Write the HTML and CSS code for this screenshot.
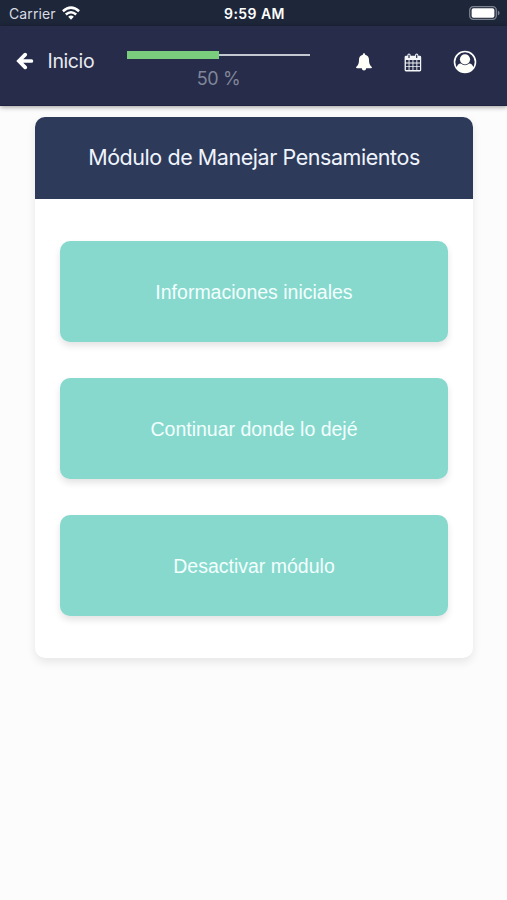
FILE: index.html
```html
<!DOCTYPE html>
<html lang="es">
<head>
<meta charset="utf-8">
<title>Módulo de Manejar Pensamientos</title>
<link rel="stylesheet" href="styles.css">
</head>
<body>
<div class="status">
  <div class="status-left">
    <span class="carrier">Carrier</span>
    <svg class="wifi" viewBox="0 0 18 14" width="18" height="14"><g fill="none" stroke="#fff" stroke-width="2.5"><path d="M.9 5.2Q9-2 17.1 5.2"/><path d="M3.8 8.5Q9 4 14.2 8.5"/></g><path d="M6.2 10.7Q9 8.4 11.8 10.7L9 13.7Z" fill="#fff"/></svg>
  </div>
  <span class="time">9:59 AM</span>
  <div class="status-right">
    <svg viewBox="0 0 31 14" width="31" height="14"><rect x=".7" y=".7" width="26.6" height="12.6" rx="3.6" fill="none" stroke="#7b8290" stroke-width="1.3"/><rect x="2.6" y="2.3" width="22.8" height="9.4" rx="1.8" fill="#fff"/><path d="M28.8 4.6Q30.6 5.4 30.6 7T28.8 9.4Z" fill="#7b8290"/></svg>
  </div>
</div>
<header class="nav">
  <a class="back">
    <svg viewBox="0 0 18 18" width="18" height="18"><path d="M9.2 2.6L2.9 9l6.3 6.4M3.4 9H15.4" fill="none" stroke="#fff" stroke-width="3.7" stroke-linecap="round"/></svg>
    <span class="back-label">Inicio</span>
  </a>
  <div class="progress">
    <div class="track"><div class="fill"></div></div>
    <span class="percent">50 %</span>
  </div>
  <div class="actions">
    <svg viewBox="0 0 16 18" width="16" height="18"><path d="M8 .3C8.8.3 9.2.9 9.1 1.7C11.8 2.2 13 4.3 13 6.6C13 11 14.1 12.6 16 14.2Q15.9 15.3 14.8 15.3H1.2Q.1 15.3 0 14.2C1.9 12.6 3 11 3 6.6C3 4.3 4.2 2.2 6.9 1.7C6.8.9 7.2.3 8 .3ZM5.8 15.2H10.2Q10 17.6 8 17.6T5.8 15.2Z" fill="#fffffa"/></svg>
    <svg class="calendar" viewBox="0 0 18 19" width="18" height="19"><path fill-rule="evenodd" fill="#f4f5f7" d="M2 2.8H3.4V2Q3.4.5 5 .5T6.6 2V2.8H11.1V2Q11.1.5 12.7.5T14.3 2V2.8H15.8Q17.2 2.8 17.2 4.2V17Q17.2 18.4 15.8 18.4H2Q.6 18.4.6 17V4.2Q.6 2.8 2 2.8ZM4.4 1.8V5H5.6V1.8ZM12.1 1.8V5H13.3V1.8ZM1.9 7V9.5H4.6V7ZM5.5 7V9.5H8.5V7ZM9.4 7V9.5H12.4V7ZM13.3 7V9.5H16V7ZM1.9 10.4V13.2H4.6V10.4ZM5.5 10.4V13.2H8.5V10.4ZM9.4 10.4V13.2H12.4V10.4ZM13.3 10.4V13.2H16V10.4ZM1.9 14.1V17H4.6V14.1ZM5.5 14.1V17H8.5V14.1ZM9.4 14.1V17H12.4V14.1ZM13.3 14.1V17H16V14.1Z"/></svg>
    <svg class="user" viewBox="0 0 24 24" width="24" height="24"><circle cx="12" cy="12" r="10.5" fill="none" stroke="#fff" stroke-width="1.6"/><circle cx="12" cy="9.3" r="5.1" fill="#fffffa"/><path d="M3.5 18Q4.2 13.5 7.8 13.4Q12 17 16.2 13.4Q19.8 13.5 20.5 18Q17 22.5 12 22.5T3.5 18Z" fill="#fffffa"/></svg>
  </div>
</header>
<main class="card">
  <h1 class="card-title"><span>Módulo de Manejar Pensamientos</span></h1>
  <div class="options">
    <button class="option">Informaciones iniciales</button>
    <button class="option">Continuar donde lo dejé</button>
    <button class="option">Desactivar módulo</button>
  </div>
</main>
</body>
</html>
```
FILE: styles.css
```css
* { box-sizing: border-box; }
body {
  margin: 0;
  min-height: 900px;
  background: #fcfcfc;
  font-family: Inter, "Liberation Sans", sans-serif;
}
svg { display: block; flex: none; }
.status {
  height: 26px;
  display: grid;
  grid-template-columns: 1fr auto 1fr;
  align-items: center;
  padding: 0 7px 0 9px;
  background: #1e263a;
  color: #fff;
  font-size: 14px;
}
.status-left { display: flex; align-items: center; gap: 6px; }
.carrier { color: #d9dce2; font-size: 14px; letter-spacing: .1px; }
.time { font-size: 14px; font-weight: 600; letter-spacing: .45px; }
.status-right { display: flex; justify-content: flex-end; }
.nav {
  height: 79.5px;
  display: flex;
  background: #262c49;
  border-bottom: 1px solid #1e2340;
  box-shadow: 0 1px 5px rgba(0, 0, 0, .4);
}
.back {
  width: 127px;
  height: 69px;
  display: flex;
  align-items: center;
  gap: 14px;
  padding-left: 15.6px;
  color: #e6e9f2;
  font-size: 19.5px;
  letter-spacing: -.4px;
}
.progress {
  width: 183px;
  padding-top: 25px;
  display: flex;
  flex-direction: column;
  align-items: center;
}
.track {
  width: 100%;
  height: 8px;
  display: flex;
  background: linear-gradient(#c3c8d0, #c3c8d0) center / 100% 2px no-repeat;
}
.fill { width: 50%; background: #79cd7c; }
.percent {
  margin-top: 8px;
  line-height: 24px;
  color: #80869a;
  font-size: 18px;
  letter-spacing: -.4px;
}
.actions {
  height: 72px;
  display: flex;
  align-items: center;
  margin-left: 46px;
}
.calendar { margin-left: 32px; }
.user { margin-left: 31px; }
.card {
  width: 438px;
  height: 541px;
  margin: 11.5px 0 0 35px;
  border-radius: 10px;
  background: #fff;
  box-shadow: 0 4px 10px rgba(0, 0, 0, .09);
}
.card-title {
  height: 81.5px;
  margin: 0;
  padding-bottom: 2px;
  display: flex;
  align-items: center;
  justify-content: center;
  border-radius: 10px 10px 0 0;
  background: #2e3a5a;
  color: #eff4fd;
  font-size: 21.5px;
  font-weight: 400;
  letter-spacing: -.44px;
  white-space: nowrap;
}
.options {
  display: grid;
  gap: 36.2px;
  padding: 42.9px 25px 0;
}
.option {
  height: 100.6px;
  padding: 2px 0 0;
  border: 0;
  border-radius: 10px;
  background: #87d9ce;
  box-shadow: 0 4px 7px rgba(0, 0, 0, .11);
  color: #f3fffd;
  font: 19.5px "Liberation Sans", sans-serif;
}
```
